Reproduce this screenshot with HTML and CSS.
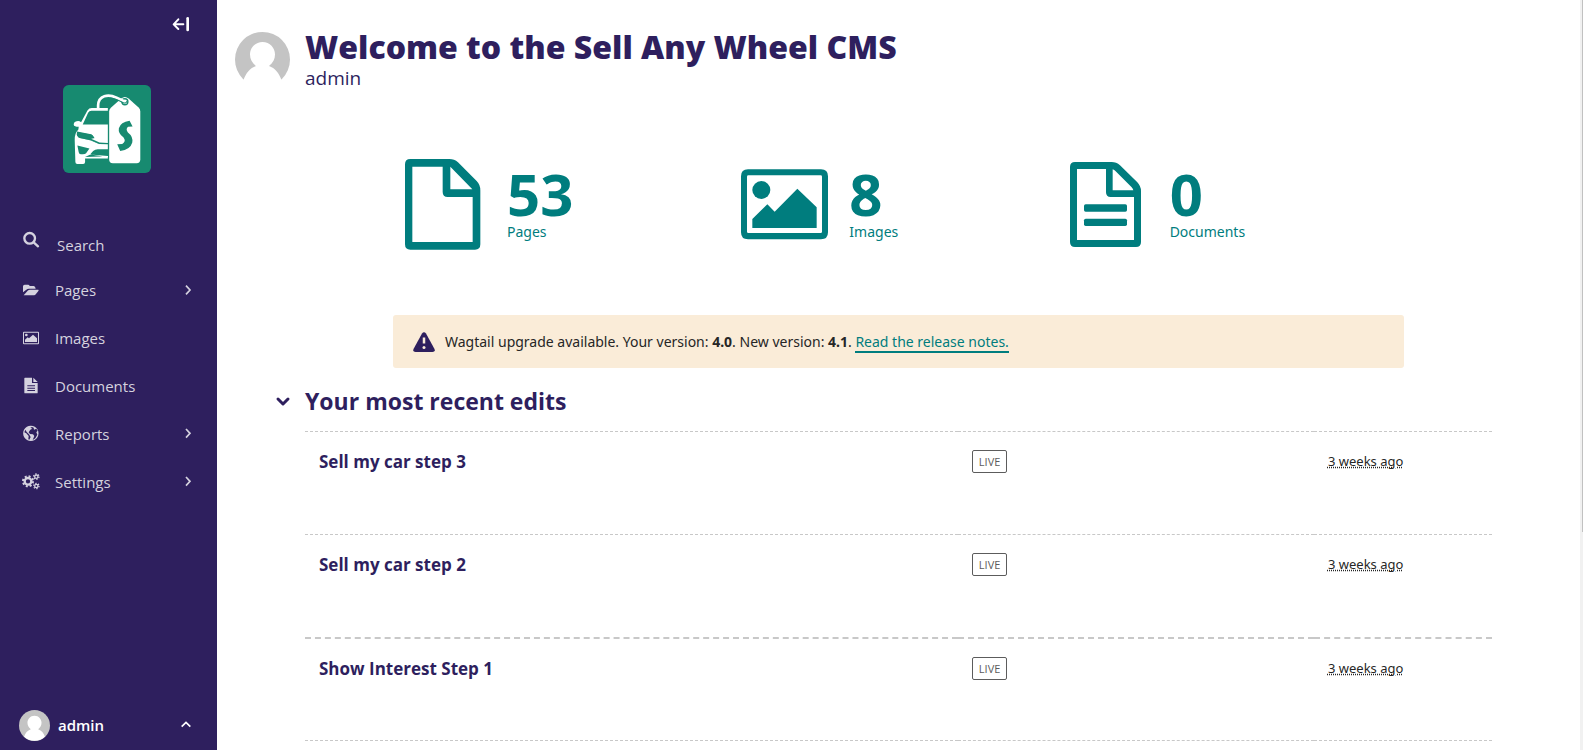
FILE: index.html
```html
<!DOCTYPE html>
<html lang="en">
<head>
<meta charset="utf-8">
<title>Sell Any Wheel CMS</title>
<link rel="stylesheet" href="styles.css">
</head>
<body>
<div class="layout">
  <aside class="sidebar">
    <button class="collapse" type="button" aria-label="Collapse menu">
      <svg viewBox="516 48 54 48"><path d="M550 73H522M535 58L521 73L535 87" class="line-5"/><path d="M563 55V90" class="line-8"/></svg>
    </button>
    <a class="logo" href="#" aria-label="Dashboard">
      <svg viewBox="190 255 263 263">
        <rect x="190" y="255" width="263" height="263" rx="17" fill="#178a70"/>
        <path fill="#fff" d="M324 324H276Q268 324 263 331L244 366Q238 361 228 364Q221 367 222 374Q223 380 237 380L236 388Q224 400 225 420L227 485Q227 491 233 491H250Q256 491 256 485V475H324V468L256 470L272 463L324 471V467L271 463L280 452Q286 447 294 447H324V432L299 431L275 421L237 413L232 407L234 396L276 404L284 413L274 416L299 427L324 428V373H249L265 338Q268 332 275 332H324Z"/>
        <path fill="#178a70" d="M232 394L274 402Q279 404 284 414L260 415L237 410L231 404ZM233 436L269 445L259 459Q256 462 249 462H243Q238 462 237 456Z"/>
        <path fill="none" stroke="#178a70" stroke-width="2" d="M240 412L272 419L297 430H324"/>
        <path fill="#fff" d="M328 334Q328 328 333 323L364 295Q375 286 386 295L416 322Q421 327 421 334V478Q421 489 410 489H339Q328 489 328 478Z"/>
        <circle cx="375" cy="305" r="9" fill="#fff" stroke="#178a70" stroke-width="4"/>
        <path fill="none" stroke="#fff" stroke-width="8" d="M295 327V316C296 286 325 281 350 293L376 305"/>
        <path fill="none" stroke="#178a70" stroke-width="3" d="M330 294Q345 295 370 308Q378 312 382 302"/>
        <path fill="#178a70" d="M389 362Q362 366 357 384Q354 399 371 412Q380 424 367 431L352 432L361 452Q391 449 397 427Q400 409 384 397Q376 386 385 380L398 379Z"/>
      </svg>
    </a>
    <form class="search">
      <button type="submit" aria-label="Submit search">
        <svg viewBox="66 50 54 54"><circle cx="89" cy="72" r="16" class="line-7"/><path d="M101 84L114 96" class="line-7"/></svg>
      </button>
      <input type="text" placeholder="Search" aria-label="Search">
    </form>
    <nav class="menu">
      <a href="#">
        <svg viewBox="66 197 54 54"><path d="M69 231V213Q69 208 74 208H84Q88 208 89 212H101Q106 212 107 220H87Q82 220 79 223Z"/><path d="M71 240L83 226Q86 223 90 223H115Q117 224 115 227L106 238Q103 240 99 240Z"/></svg>
        <span>Pages</span>
        <svg class="chevron" viewBox="541 201 48 48"><path d="M559 212L571 225L559 238"/></svg>
      </a>
      <a href="#">
        <svg viewBox="66 341 54 54"><path fill-rule="evenodd" d="M72 349H114Q117 349 117 352V384Q117 387 114 387H72Q69 387 69 384V352Q69 349 72 349ZM72 352V384H114V352Z"/><path d="M75 380V373L83 366L87 369L99 358L111 369V380Z"/><circle cx="79" cy="359" r="4"/></svg>
        <span>Images</span>
      </a>
      <a href="#">
        <svg viewBox="66 485 54 54"><path fill-rule="evenodd" d="M73 489Q73 487 75 487H96V503H113V532Q113 534 111 534H75Q73 534 73 532ZM82 510V513H105V510ZM82 517V520H105V517ZM82 524V527H105V524Z"/><path d="M100 487L113 500H100Z"/></svg>
        <span>Documents</span>
      </a>
      <a href="#">
        <svg viewBox="66 629 54 54"><path fill-rule="evenodd" d="M93 631A23 23 0 1 1 92 631ZM96 635L91 637L97 640L91 643L86 651L90 656L99 657L103 662L98 674L106 669L112 658L109 651L113 646L109 640L102 643L101 637ZM76 643L73 651L79 654L86 662L85 672L88 673L92 665L87 657L80 650Z"/></svg>
        <span>Reports</span>
        <svg class="chevron" viewBox="541 633 48 48"><path d="M559 642L571 655L559 668"/></svg>
      </a>
      <a href="#">
        <svg viewBox="66 773 54 54"><circle cx="84" cy="798" r="10" class="line-7"/><circle cx="84" cy="798" r="15" class="teeth"/><circle cx="109" cy="784" r="5" class="line-4"/><circle cx="109" cy="784" r="8" class="teeth-small"/><circle cx="109" cy="812" r="5" class="line-4"/><circle cx="109" cy="812" r="8" class="teeth-small"/></svg>
        <span>Settings</span>
        <svg class="chevron" viewBox="541 777 48 48"><path d="M559 786L571 799L559 812"/></svg>
      </a>
    </nav>
    <button class="account" type="button">
      <svg class="avatar-small" viewBox="0 0 55 55"><circle cx="27.5" cy="27.5" r="27.5" fill="#c4c4c4"/><path fill="#fff" d="M27.500 10C35 10 40 16 40 22.500C40 27 38 31 34 34C40 36 44 41 46 47.500A27.500 27.500 0 0 1 9 47.500C11 41 15 36 21 34C17 31 15 27 15 22.500C15 16 20 10 27.500 10Z"/></svg>
      <span>admin</span>
      <svg class="chevron" viewBox="534 80 48 48"><path d="M545 109L558 96L571 109"/></svg>
    </button>
  </aside>

  <main class="main">
    <header class="welcome">
      <svg class="avatar" viewBox="0 0 55 55"><circle cx="27.5" cy="27.5" r="27.5" fill="#c4c4c4"/><path fill="#fff" d="M27.500 10C35 10 40 16 40 22.500C40 27 38 31 34 34C40 36 44 41 46.500 48V55H8.500V48C11 41 15 36 21 34C17 31 15 27 15 22.500C15 16 20 10 27.500 10Z"/></svg>
      <div>
        <h1>Welcome to the Sell Any Wheel CMS</h1>
        <p>admin</p>
      </div>
    </header>

    <section class="summary" aria-label="Site summary">
      <a href="#">
        <svg viewBox="6 42 300 300"><path fill-rule="evenodd" d="M61 57H178Q193 57 204 67L260 123Q271 134 271 151V313Q271 329 255 329H61Q45 329 45 313V73Q45 57 61 57ZM67 80V306H248V171H173Q158 171 158 156V80ZM181 80V148H247Z"/></svg>
        <span class="figure"><strong>53</strong><span>Pages</span></span>
      </a>
      <a href="#">
        <svg viewBox="1032 42 300 300"><path fill-rule="evenodd" d="M1074 88H1293Q1314 88 1314 109V277Q1314 298 1293 298H1074Q1053 298 1053 277V109Q1053 88 1074 88ZM1075 106Q1071 106 1071 110V275Q1071 279 1075 279H1292Q1296 279 1296 275V110Q1296 106 1292 106Z"/><circle cx="1114" cy="150" r="27"/><path d="M1087 264V237L1132 193L1154 215L1222 146L1280 202V264Z"/></svg>
        <span class="figure"><strong>8</strong><span>Images</span></span>
      </a>
      <a href="#">
        <svg viewBox="702 42 300 300"><path fill-rule="evenodd" d="M762 66H872Q886 66 897 76L949 127Q960 139 960 153V306Q960 321 945 321H762Q747 321 747 306V81Q747 66 762 66ZM768 87V300H939V171H869Q855 171 855 157V87ZM875 88V151H937Q936 146 932 142L884 94Q880 90 875 88Z"/><rect x="789" y="193" width="129" height="22" rx="5"/><rect x="789" y="236" width="129" height="22" rx="5"/></svg>
        <span class="figure"><strong>0</strong><span>Documents</span></span>
      </a>
    </section>

    <div class="notice" role="status">
      <svg viewBox="0 0 22 20"><path d="M9 1.500Q11-1 13 1.500L21.500 17Q22.500 20 19.500 20H2.500Q-.5 20 .5 17Z"/><path d="M11 5.500V11.500" stroke="#faecd8" stroke-width="2.500"/><circle cx="11" cy="15.500" r="1.500" fill="#faecd8"/></svg>
      <p>Wagtail upgrade available. Your version: <b>4.0</b>. New version: <b>4.1</b>. <a href="#">Read the release notes.</a></p>
    </div>

    <section class="edits">
      <h2><button type="button"><svg viewBox="0 0 16 16"><path d="M3 6L8 11L13 6"/></svg>Your most recent edits</button></h2>
      <table>
        <tbody>
          <tr><td><a href="#">Sell my car step 3</a></td><td><a class="status" href="#">LIVE</a></td><td><time>3 weeks ago</time></td></tr>
          <tr><td><a href="#">Sell my car step 2</a></td><td><a class="status" href="#">LIVE</a></td><td><time>3 weeks ago</time></td></tr>
          <tr><td><a href="#">Show Interest Step 1</a></td><td><a class="status" href="#">LIVE</a></td><td><time>3 weeks ago</time></td></tr>
        </tbody>
      </table>
    </section>
  </main>
  <div class="scroll-track"><div class="scroll-thumb"></div></div>
</div>
</body>
</html>
```
FILE: styles.css
```css
* { box-sizing: border-box; }

body {
  margin: 0;
  font-family: "Noto Sans", "Open Sans", sans-serif;
  font-size: 14px;
  line-height: 20px;
  color: #262626;
  background: #fff;
}

button, input { font: inherit; color: inherit; background: none; border: 0; padding: 0; margin: 0; }
a { color: inherit; text-decoration: none; }
h1, h2, p { margin: 0; }
svg { display: block; flex: none; }

.layout {
  display: grid;
  grid-template-columns: 217px minmax(0, 1fr) 3px;
  min-height: 100vh;
}

/* Sidebar */
.sidebar {
  display: flex;
  flex-direction: column;
  background: #2e1f5e;
  color: #d5d2df;
  fill: currentColor;
  font-family: "Open Sans", "Noto Sans", sans-serif;
}
.collapse { align-self: flex-end; margin: 16px 27px 0 0; color: #fff; }
.collapse svg { width: 18px; height: 16px; }
.logo { align-self: flex-start; margin: 53px 0 46px 63px; }
.logo svg { width: 88px; height: 88px; }

.line-4, .line-5, .line-7, .line-8 { fill: none; stroke: currentColor; stroke-linecap: round; stroke-linejoin: round; }
.line-4 { stroke-width: 4; }
.line-5 { stroke-width: 6; }
.line-7 { stroke-width: 7; }
.line-8 { stroke-width: 8; }
.teeth { fill: none; stroke: currentColor; stroke-width: 6; stroke-dasharray: 6 5.78; }
.teeth-small { fill: none; stroke: currentColor; stroke-width: 4; stroke-dasharray: 4 4.38; }

.search { display: flex; gap: 17px; height: 47px; padding: 12px 22px; font-size: 15px; }
.search svg { width: 18px; height: 18px; }
.search button { align-self: flex-start; }
.search input { flex: 1; min-width: 0; height: 28px; }
.search input::placeholder { color: #d5d2df; opacity: 1; }

.menu a {
  display: flex;
  align-items: center;
  gap: 15px;
  height: 48px;
  padding: 0 21px 0 22px;
  font-size: 15px;
}
.menu svg { width: 18px; height: 18px; }
.menu span, .account span { flex: 1; text-align: left; }
.menu .chevron, .account .chevron { width: 16px; height: 16px; fill: none; stroke: currentColor; stroke-width: 5; }

.account {
  display: flex;
  align-items: center;
  gap: 8px;
  height: 50px;
  margin-top: auto;
  padding: 0 23px 0 19px;
  color: #fff;
  font-size: 15px;
  font-weight: 600;
}
.avatar-small { width: 31px; height: 31px; }

/* Main column */
.main { padding-top: 29px; }
.welcome { display: flex; align-items: flex-start; gap: 15px; padding-left: 18px; color: #2e1f5e; }
.avatar { width: 55px; height: 55px; margin-top: 3px; }
.welcome h1 { font-family: "Open Sans", "Noto Sans", sans-serif; font-size: 32px; line-height: 36px; font-weight: 800; }
.welcome p { font-family: "Open Sans", "Noto Sans", sans-serif; font-size: 19px; line-height: 26px; }

.summary {
  display: grid;
  grid-template-columns: 342fr 320fr 350fr;
  margin: 63px 175px 61px;
  color: #007d7e;
  fill: currentColor;
}
.summary a { display: flex; align-items: center; gap: 15px; }
.summary svg { width: 100px; height: 100px; }
.figure { display: flex; flex-direction: column; }
.figure strong { font-size: 58px; line-height: 56px; font-weight: 700; }

.notice {
  display: flex;
  align-items: center;
  gap: 10px;
  margin: 0 176px;
  padding: 16px 20px;
  border-radius: 3px;
  background: #faecd8;
}
.notice p { line-height: 21px; }
.notice svg { width: 22px; height: 20px; fill: #2e1f5e; }
.notice a { color: #007d7e; border-bottom: 2px solid #007d7e; }

/* Recent edits */
.edits { padding: 18px 88px 0 58px; color: #2e1f5e; font-family: "Open Sans", "Noto Sans", sans-serif; }
.edits h2 { font-size: 23px; line-height: 30px; font-weight: 700; }
.edits button { display: flex; align-items: center; gap: 14px; font-weight: 700; }
.edits button svg { width: 16px; height: 16px; fill: none; stroke: currentColor; stroke-width: 3; stroke-linecap: round; stroke-linejoin: round; }
.edits table {
  width: calc(100% - 30px);
  margin: 15px 0 0 30px;
  table-layout: fixed;
  border-collapse: collapse;
}
.edits tr { height: 103px; }
.edits td { padding: 18px 14px; vertical-align: top; border: dashed #c8c8c8; border-width: 1px 0; }
.edits tr:last-child td { border-top-width: 2px; }
.edits td:nth-child(1) { width: 55%; font-size: 17px; line-height: 24px; font-weight: 700; }
.edits td:nth-child(2) { width: 30%; }
.edits td:nth-child(3) { width: 15%; color: #262626; }
.status {
  display: inline-block;
  padding: 0 6px;
  border: 1px solid #5c5c5c;
  border-radius: 2px;
  color: #5c5c5c;
  font-size: 11px;
  line-height: 21px;
}
.edits time { font-family: "Noto Sans", "Open Sans", sans-serif; font-size: 13px; line-height: 22px; text-decoration: underline dotted; }

.scroll-track { background: #f1f1f1; }
.scroll-thumb { width: 1px; height: 532px; margin-left: auto; background: #c1c1c1; }
```
